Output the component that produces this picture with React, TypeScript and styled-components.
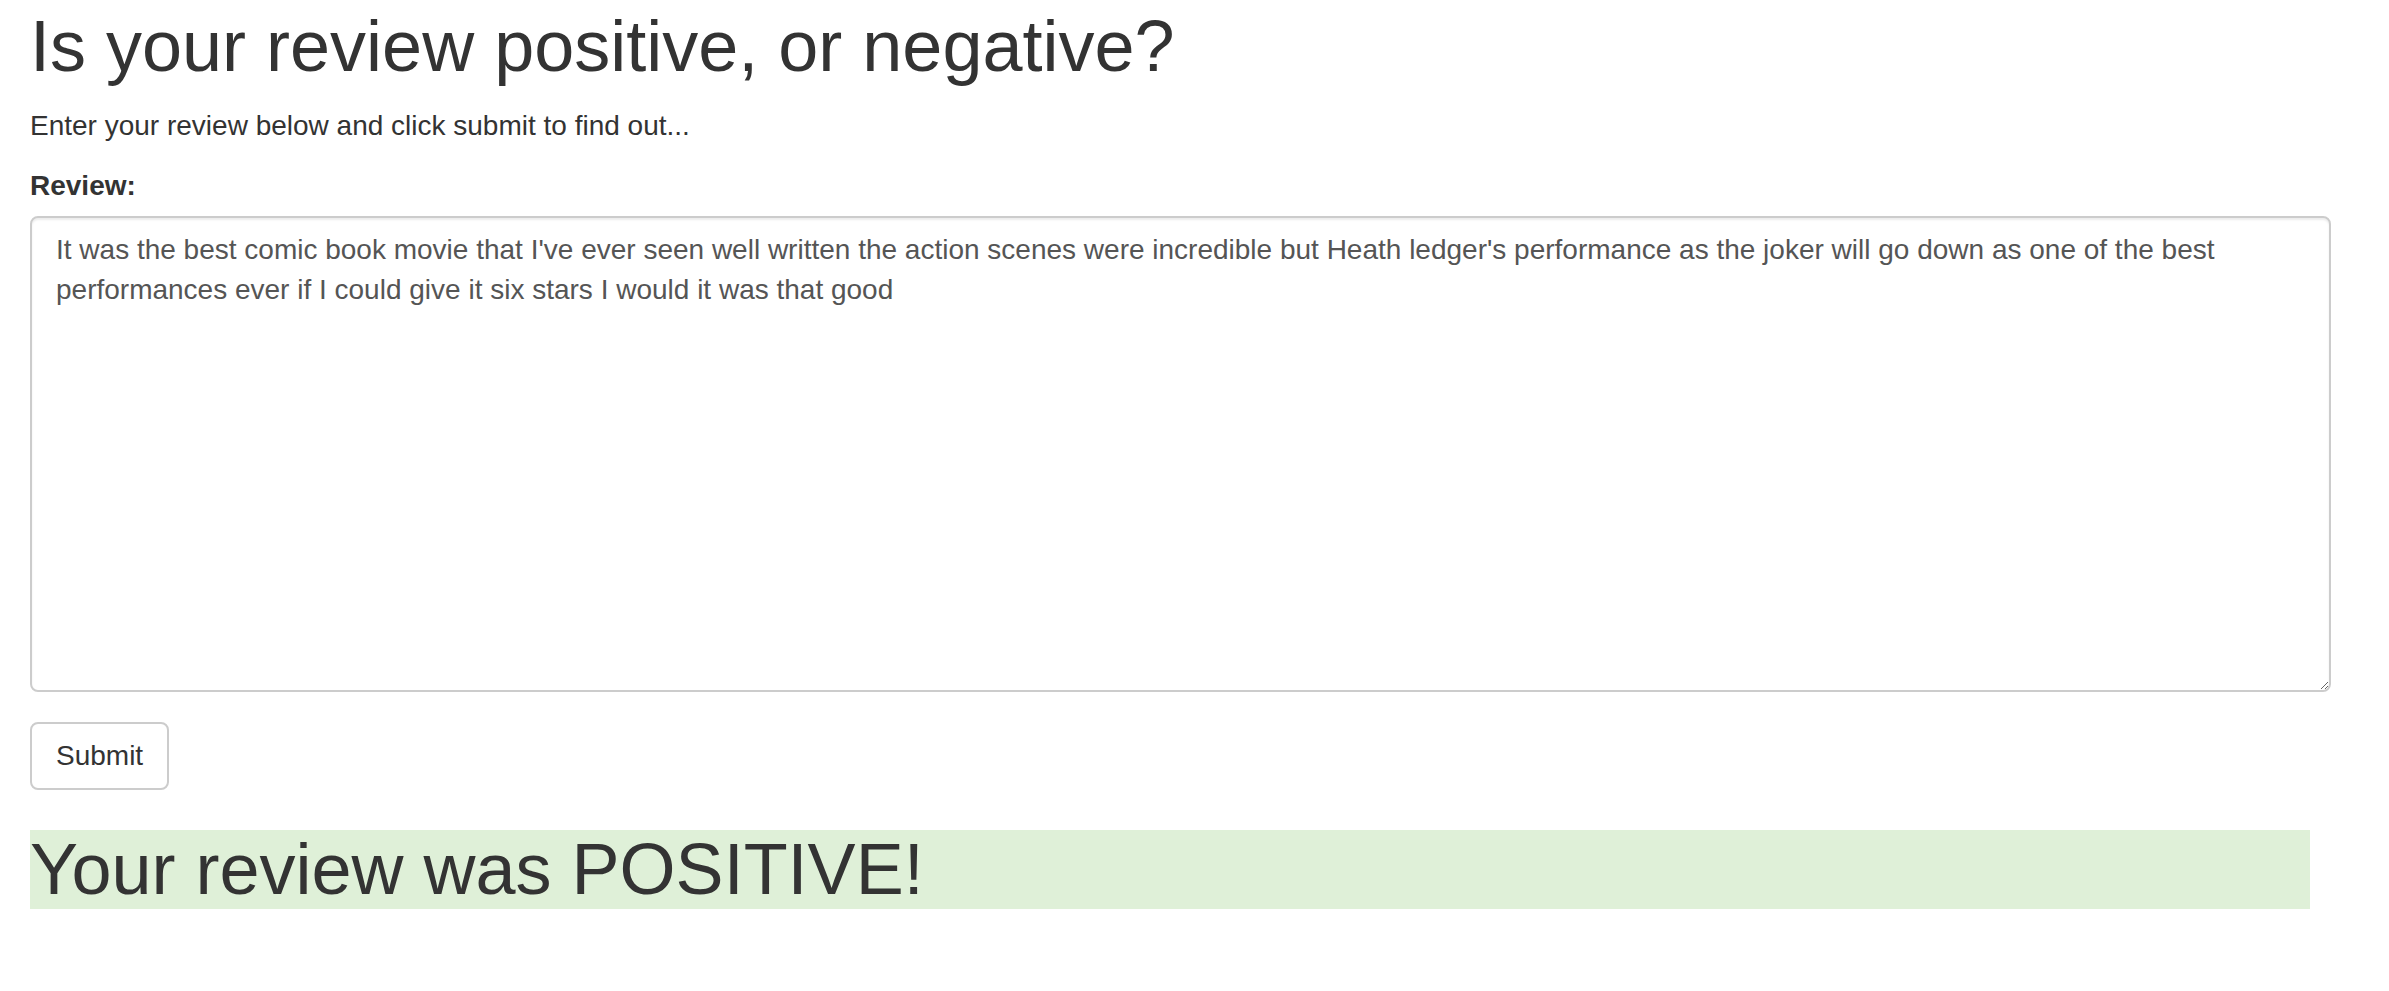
import React from "react";
import styled, { createGlobalStyle } from "styled-components";

const GlobalStyle = createGlobalStyle`
  html, body {
    margin: 0;
    padding: 0;
    background: #fff;
  }
  body {
    font-family: "Liberation Sans", Arial, Helvetica, sans-serif;
    font-size: 28px;
    line-height: 1.42857143;
    color: #333;
  }
  * { box-sizing: border-box; }
`;

const Container = styled.div`
  padding: 0 58px 0 30px;
`;

const Title = styled.h1`
  margin: 7px 0 20px;
  font-size: 72px;
  font-weight: 500;
  line-height: 1.1;
  color: #333;
`;

const Lead = styled.p`
  margin: 0 0 20px;
`;

const Form = styled.form`
  margin: 0;
`;

const FormGroup = styled.div`
  margin-bottom: 30px;
`;

const Label = styled.label`
  display: inline-block;
  max-width: 100%;
  margin-bottom: 10px;
  font-weight: 700;
`;

const TextArea = styled.textarea`
  display: block;
  width: 100%;
  height: 476px;
  padding: 12px 24px;
  font-family: inherit;
  font-size: 28px;
  line-height: 1.42857143;
  color: #555;
  background: #fff;
  border: 2px solid #ccc;
  border-radius: 8px;
  box-shadow: inset 0 2px 2px rgba(0, 0, 0, 0.075);
  resize: vertical;
  outline: none;
`;

const Button = styled.button`
  display: inline-block;
  margin: 0;
  padding: 12px 24px;
  font-family: inherit;
  font-size: 28px;
  line-height: 1.42857143;
  color: #333;
  background: #fff;
  border: 2px solid #ccc;
  border-radius: 8px;
  cursor: pointer;
`;

const Result = styled.h1<{ $tone: "success" | "danger" }>`
  margin: 40px 21px 20px 0;
  font-size: 72px;
  font-weight: 500;
  line-height: 1.1;
  color: #333;
  background: ${(p) => (p.$tone === "success" ? "#dff0d8" : "#f2dede")};
`;

const review =
  "It was the best comic book movie that I've ever seen well written the action scenes were incredible but Heath ledger's performance as the joker will go down as one of the best performances ever if I could give it six stars I would it was that good";

export default function App() {
  return (
    <>
      <GlobalStyle />
      <Container>
        <Title>Is your review positive, or negative?</Title>
        <Lead>Enter your review below and click submit to find out...</Lead>
        <Form onSubmit={(e) => e.preventDefault()}>
          <FormGroup>
            <Label htmlFor="review">Review:</Label>
            <TextArea id="review" defaultValue={review} />
          </FormGroup>
          <Button type="submit">Submit</Button>
        </Form>
        <Result $tone="success">Your review was POSITIVE!</Result>
      </Container>
    </>
  );
}
